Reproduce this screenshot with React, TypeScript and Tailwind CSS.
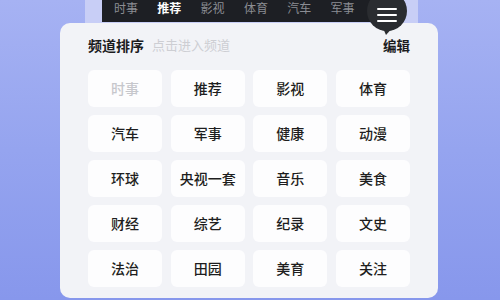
import React from "react";

const tabs = ["时事", "推荐", "影视", "体育", "汽车", "军事"];
const cells = [
  "时事", "推荐", "影视", "体育",
  "汽车", "军事", "健康", "动漫",
  "环球", "央视一套", "音乐", "美食",
  "财经", "综艺", "纪录", "文史",
  "法治", "田园", "美育", "关注",
];

export default function App() {
  return (
    <div
      className="relative w-[500px] h-[300px] overflow-hidden bg-gradient-to-b from-[#a6b2f3] via-[#95a4ef] to-[#8797ec]"
      style={{ fontFamily: '"Noto Sans CJK SC", "Noto Sans", sans-serif' }}
    >
      {/* phone top strip */}
      <div className="ml-[85px] w-[333px] h-[23px] bg-[#c8cef6] flex">
        <div className="ml-[17px] w-[300px] h-[22px] bg-[#1d1f24] flex items-start pl-[12px] pt-[0px]">
          {tabs.map((t) => (
            <div
              key={t}
              className={
                "w-[43.3px] text-[12px] leading-[15px] " +
                (t === "推荐" ? "text-white font-bold" : "text-[#8b8d93]")
              }
            >
              {t}
            </div>
          ))}
        </div>
      </div>

      {/* card */}
      <div className="ml-[60px] w-[378px] h-[275px] bg-[#f2f3f7] rounded-[10px] px-[28px] pt-[12px]">
        <div className="flex items-center h-[20px]">
          <span className="text-[14px] font-bold text-[#1c1c1e]">频道排序</span>
          <span className="ml-[8px] text-[13px] text-[#cdced3]">点击进入频道</span>
          <span className="ml-auto text-[13.5px] font-bold text-[#1c1c1e]">编辑</span>
        </div>
        <div className="mt-[15px] grid grid-cols-4 gap-x-[8.7px] gap-y-[8px]">
          {cells.map((c, i) => (
            <div
              key={c}
              className={
                "h-[37px] bg-[#fdfdfe] rounded-[6px] flex items-center justify-center text-[14px] font-medium " +
                (i === 0 ? "text-[#c6c7cc]" : "text-[#1e1e20]")
              }
            >
              {c}
            </div>
          ))}
        </div>
      </div>

      {/* menu bubble */}
      <div className="absolute left-[367px] top-[-9px] w-[40px] h-[40px] rounded-full bg-[#2a2c30] flex flex-col items-center justify-center gap-[3.5px] pt-[8px]">
        <div className="w-[20px] h-[2.5px] rounded-full bg-white" />
        <div className="w-[20px] h-[2.5px] rounded-full bg-white" />
        <div className="w-[20px] h-[2.5px] rounded-full bg-white" />
      </div>
      <svg className="absolute left-[380px] top-[26px]" width="16" height="10" viewBox="0 0 16 10">
        <path d="M2 0 L14 0 L6 9 Z" fill="#2a2c30" />
      </svg>
    </div>
  );
}
